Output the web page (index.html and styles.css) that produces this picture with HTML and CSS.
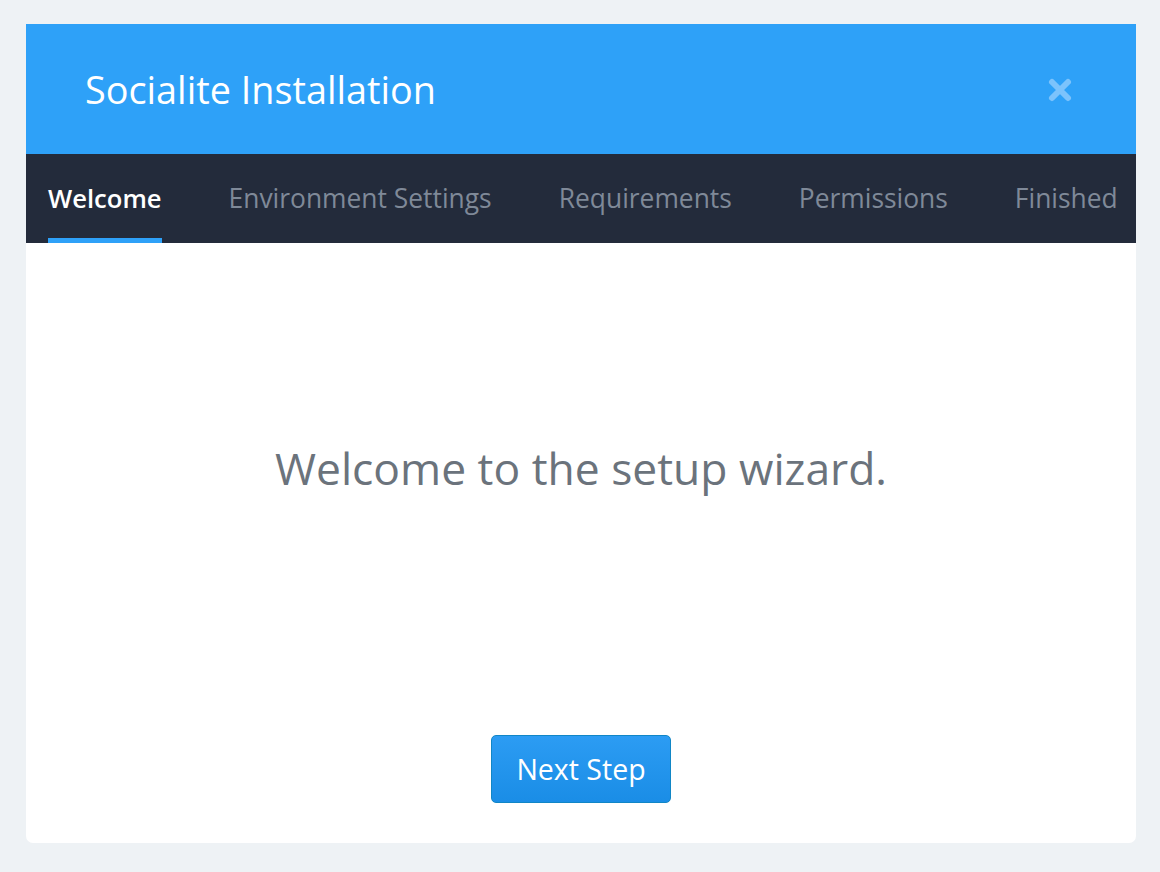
FILE: index.html
```html
<!DOCTYPE html>
<html>
<head>
<meta charset="utf-8">
<link rel="stylesheet" href="styles.css">
</head>
<body>
<div class="page">
  <div class="card">
    <div class="header">
      <h1 class="title">Socialite Installation</h1>
      <span class="close" aria-label="Close">
        <svg width="26" height="26" viewBox="0 0 26 26"><path d="M5 5 L21 21 M21 5 L5 21" stroke="currentColor" stroke-width="6" stroke-linecap="round"/></svg>
      </span>
    </div>
    <nav class="tabs">
      <span class="tab active">Welcome</span>
      <span class="tab">Environment Settings</span>
      <span class="tab">Requirements</span>
      <span class="tab">Permissions</span>
      <span class="tab">Finished</span>
    </nav>
    <div class="content">
      <p class="welcome">Welcome to the setup wizard.</p>
      <button class="btn">Next Step</button>
    </div>
  </div>
</div>
</body>
</html>
```

FILE: styles.css
```css
html, body {
  margin: 0;
  padding: 0;
  background: #eef2f5;
  font-family: "Open Sans", "Noto Sans", sans-serif;
}
.page {
  padding: 24px 24px 29px 26px;
}
.card {
  width: 1110px;
  background: #fff;
  border-radius: 0 0 7px 7px;
  display: flex;
  flex-direction: column;
}
.header {
  height: 130px;
  background: #2ea1f8;
  display: flex;
  align-items: center;
  justify-content: space-between;
  padding: 0 63px 0 59px;
  box-sizing: border-box;
}
.title {
  margin: 0;
  font-size: 37.8px;
  font-weight: 400;
  color: #fff;
}
.close {
  color: #7cc3fc;
  display: flex;
  margin-top: 2px;
}
.tabs {
  height: 89px;
  background: #232b3b;
  display: flex;
  align-items: stretch;
  gap: 67px;
  padding: 0 0 0 22px;
}
.tab {
  display: flex;
  align-items: center;
  font-size: 26.4px;
  color: #7f8998;
  border-bottom: 5px solid transparent;
  padding-top: 4px;
}
.tab.active {
  color: #fff;
  font-size: 25.6px;
  font-weight: 600;
  border-bottom-color: #2ea1f8;
}
.content {
  height: 600px;
  display: flex;
  flex-direction: column;
  align-items: center;
  padding-bottom: 40px;
  box-sizing: border-box;
}
.welcome {
  margin: 195px 0 0;
  font-size: 44.4px;
  line-height: 60px;
  color: #6b737c;
}
.btn {
  margin-top: auto;
  width: 180px;
  height: 68px;
  font-family: inherit;
  font-size: 28.5px;
  font-weight: 400;
  color: #fff;
  background: linear-gradient(#2c9cf3, #1a8de6);
  border: 1px solid #1186c6;
  border-radius: 5px;
}
```
